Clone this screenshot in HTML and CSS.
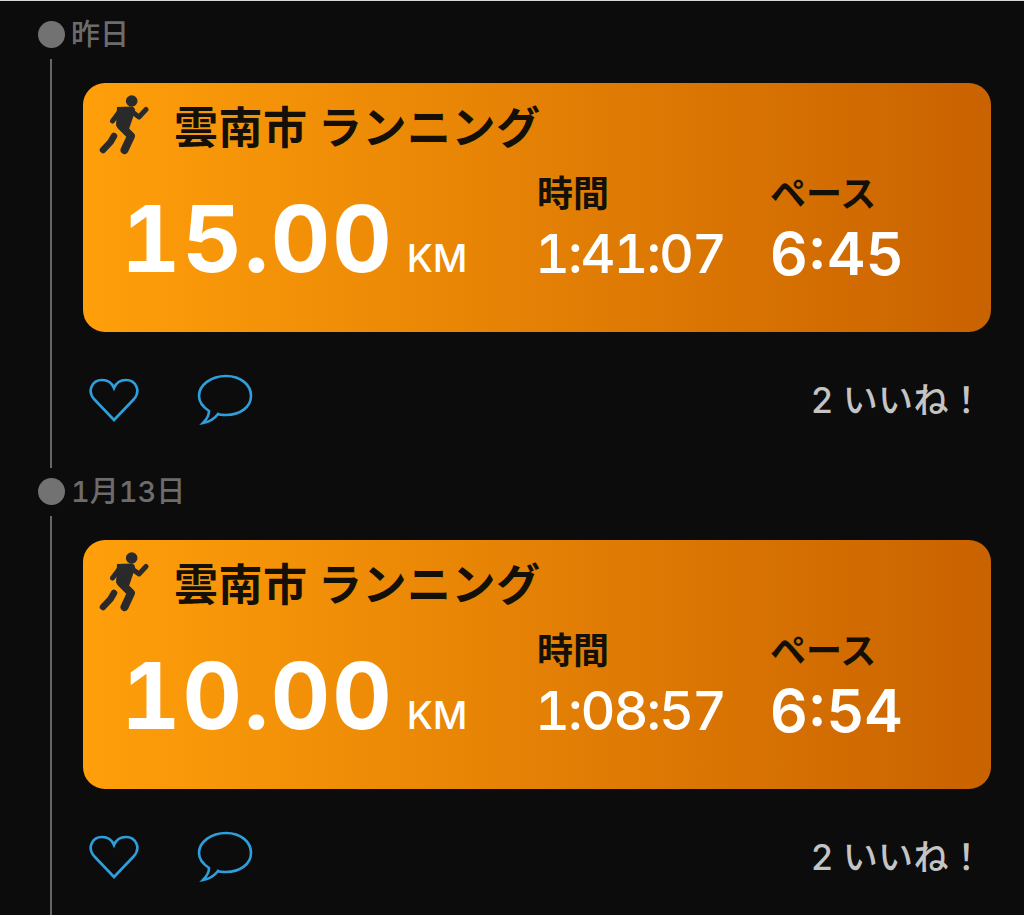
FILE: index.html
```html
<!DOCTYPE html>
<html lang="ja">
<head>
<meta charset="utf-8">
<title>アクティビティ</title>
<link rel="stylesheet" href="styles.css">
</head>
<body>
<svg class="defs" width="0" height="0" aria-hidden="true">
  <defs>
    <symbol id="runner" viewBox="10 10 50 60">
      <circle cx="42.700" cy="16" r="5.800"/>
      <path class="limb limb-arm" d="M31 26 L23.500 36"/>
      <path class="limb limb-arm" d="M42 26 L50 32 L57 24.500"/>
      <path d="M28 22 L43 21.500 Q47.500 23 45.500 28 L39 47 L27 41 Z"/>
      <path class="limb limb-front" d="M32 41 L42 51 L35.500 65"/>
      <path class="limb limb-back" d="M25 51 L21.500 57 L14 65"/>
    </symbol>
    <symbol id="heart" viewBox="0 0 50 44">
      <path d="M25 42 L5 21 C-2 13 3 2 13 2 C19 2 23 5 25 10 C27 5 31 2 37 2 C47 2 52 13 45 21 Z"/>
    </symbol>
    <symbol id="bubble" viewBox="0 0 56 52">
      <path d="M29 2 C44 2 54 11 54 22 C54 33 43 41 29 41 C26 41 23 41 21 40 C18 44 12 48 6 49 C9 46 12 42 12 37 C6 33 2 28 2 22 C2 11 14 2 29 2 Z"/>
    </symbol>
  </defs>
</svg>
<main class="timeline">
  <section class="day">
    <header class="day-head"><span class="dot"></span><time class="day-label">昨日</time></header>
    <div class="day-body">
      <article class="card">
        <div class="card-title">
          <svg class="runner"><use href="#runner"/></svg>
          <h2 class="title-text">雲南市 ランニング</h2>
        </div>
        <div class="stats">
          <p class="distance"><span class="distance-value">15.00</span><span class="unit">KM</span></p>
          <div class="stat stat-time"><span class="stat-label">時間</span><span class="stat-value">1:41:07</span></div>
          <div class="stat stat-pace"><span class="stat-label">ペース</span><span class="stat-value">6:45</span></div>
        </div>
      </article>
      <div class="actions">
        <svg class="icon-heart"><use href="#heart"/></svg>
        <svg class="icon-bubble"><use href="#bubble"/></svg>
        <span class="likes">2 いいね！</span>
      </div>
    </div>
  </section>
  <section class="day">
    <header class="day-head"><span class="dot"></span><time class="day-label">1月13日</time></header>
    <div class="day-body">
      <article class="card">
        <div class="card-title">
          <svg class="runner"><use href="#runner"/></svg>
          <h2 class="title-text">雲南市 ランニング</h2>
        </div>
        <div class="stats">
          <p class="distance"><span class="distance-value">10.00</span><span class="unit">KM</span></p>
          <div class="stat stat-time"><span class="stat-label">時間</span><span class="stat-value">1:08:57</span></div>
          <div class="stat stat-pace"><span class="stat-label">ペース</span><span class="stat-value">6:54</span></div>
        </div>
      </article>
      <div class="actions">
        <svg class="icon-heart"><use href="#heart"/></svg>
        <svg class="icon-bubble"><use href="#bubble"/></svg>
        <span class="likes">2 いいね！</span>
      </div>
    </div>
  </section>
</main>
</body>
</html>
```
FILE: styles.css
```css
* { box-sizing: border-box; }
html, body { margin: 0; padding: 0; }
body {
  height: 915px;
  overflow: hidden;
  background: #0c0c0c;
  border-top: 1px solid #d8d8d8;
  font-family: Inter, "Noto Sans CJK JP", sans-serif;
}
.defs { position: absolute; }
.timeline { padding: 20px 33px 0 38px; }
.day { margin-bottom: 10px; }
.day-head { display: flex; align-items: center; height: 27px; gap: 6px; }
.dot { width: 27px; height: 27px; border-radius: 50%; background: #727272; }
.day-label { font-size: 29px; font-weight: 500; color: #6c6c6c; line-height: 27px; font-variant-numeric: tabular-nums; }
.day-body {
  margin: 11px 0 0 12px;
  border-left: 2px solid #666;
  padding: 24px 0 0 31px;
  height: 409px;
}
.card {
  height: 249px;
  border-radius: 22px;
  background: linear-gradient(90deg, #ff9f0a 0%, #c96200 100%);
  padding: 12px 0 0 16px;
}
.card-title { display: flex; align-items: center; height: 60px; gap: 25px; }
.runner { width: 50px; height: 60px; fill: #2a2a2a; flex: none; }
.limb { fill: none; stroke: #2a2a2a; stroke-linecap: round; stroke-linejoin: round; }
.limb-arm { stroke-width: 5; }
.limb-front { stroke-width: 8; }
.limb-back { stroke-width: 6.500; }
.title-text { margin: 0; font-size: 44px; font-weight: 700; line-height: 64px; color: #141008; white-space: nowrap; font-family: "Noto Sans CJK JP", sans-serif; letter-spacing: 0.5px; }
.stats { display: flex; align-items: flex-start; color: #fff; padding: 16px 0 0 27px; }
.distance { margin: 0; width: 411px; display: flex; align-items: baseline; height: 100px; padding-top: 18px; }
.distance-value { font-size: 92px; font-weight: 700; line-height: 100px; font-variant-numeric: tabular-nums; letter-spacing: 2px; margin-left: -5px; }
.unit { font-size: 38px; font-weight: 500; margin-left: 13px; }
.stat { display: flex; flex-direction: column; gap: 11px; }
.stat-time { width: 233px; }
.stat-label { font-size: 36px; font-weight: 700; line-height: 40px; color: #141008; font-family: "Noto Sans CJK JP", sans-serif; }
.stat-value { font-size: 54px; font-weight: 500; line-height: 64px; font-variant-numeric: tabular-nums; letter-spacing: -2px; margin-left: -2px; }
.stat-pace .stat-value { font-size: 59px; font-weight: 600; font-variant-numeric: normal; letter-spacing: 0; margin-left: 0; }
.actions { display: flex; align-items: center; height: 50px; margin-top: 43px; padding-left: 6px; }
.icon-heart { width: 50px; height: 44px; fill: none; stroke: #2f9fdc; stroke-width: 2.600; }
.icon-bubble { width: 56px; height: 52px; margin-left: 58px; fill: none; stroke: #2f9fdc; stroke-width: 2.600; }
.likes { margin-left: auto; font-size: 35px; font-weight: 500; color: #c4c4c4; padding-right: 7px; margin-top: -5px; letter-spacing: 0.3px; }
```
